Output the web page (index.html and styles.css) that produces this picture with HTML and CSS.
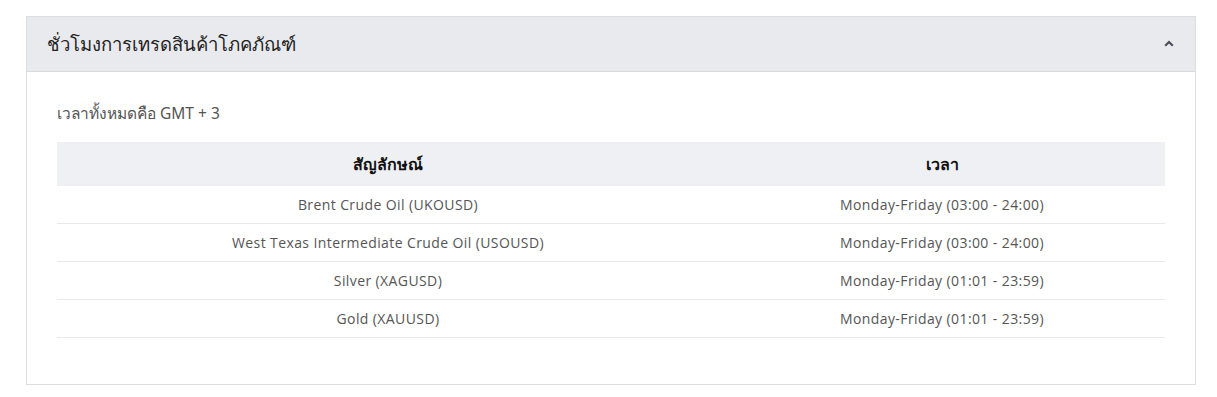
FILE: index.html
```html
<!DOCTYPE html>
<html lang="th">
<head>
<meta charset="utf-8">
<link rel="stylesheet" href="styles.css">
</head>
<body>
<div class="card">
  <div class="card-header">
    <h2 class="title">ชั่วโมงการเทรดสินค้าโภคภัณฑ์</h2>
    <svg class="chevron" width="10" height="7" viewBox="0 0 10 7"><path d="M1.2 5.8 L5 2 L8.8 5.8" fill="none" stroke="#4a4f5a" stroke-width="2.2"/></svg>
  </div>
  <div class="card-body">
    <p class="note">เวลาทั้งหมดคือ GMT + 3</p>
    <table class="hours">
      <thead>
        <tr><th class="c1">สัญลักษณ์</th><th>เวลา</th></tr>
      </thead>
      <tbody>
        <tr><td>Brent Crude Oil (UKOUSD)</td><td>Monday-Friday (03:00 - 24:00)</td></tr>
        <tr><td>West Texas Intermediate Crude Oil (USOUSD)</td><td>Monday-Friday (03:00 - 24:00)</td></tr>
        <tr><td>Silver (XAGUSD)</td><td>Monday-Friday (01:01 - 23:59)</td></tr>
        <tr><td>Gold (XAUUSD)</td><td>Monday-Friday (01:01 - 23:59)</td></tr>
      </tbody>
    </table>
  </div>
</div>
</body>
</html>
```
FILE: styles.css
```css
html, body { margin: 0; padding: 0; background: #fff; }
body { padding: 16px 21px 0 26px; font-family: "Noto Sans", "DejaVu Sans", sans-serif; }
.card { border: 1px solid #dcdde0; background: #fff; width: 1170px; box-sizing: border-box; }
.card-header { height: 54px; background: #e9eaee; border-bottom: 1px solid #d9dade; display: flex; align-items: center; justify-content: space-between; padding: 0 21px 0 20px; }
.title { margin: 0; font-size: 18.5px; font-weight: 400; color: #222; }
.chevron { display: block; margin-top: -2px; }
.card-body { padding: 30px 30px 46px 30px; }
.note { margin: 0 0 18px; font-size: 15.5px; color: #555; line-height: 22px; }
.hours { width: 100%; border-collapse: collapse; font-family: "Open Sans", "Noto Sans", sans-serif; }
.hours th { background: #eef0f3; height: 44px; font-size: 16px; font-weight: 700; color: #111; text-align: center; padding: 0; }
.hours th.c1 { width: 662px; }
.hours td { height: 37px; border-bottom: 1px solid #e9e9ea; text-align: center; font-size: 14px; letter-spacing: 0.4px; color: #555; padding: 0; }
```
